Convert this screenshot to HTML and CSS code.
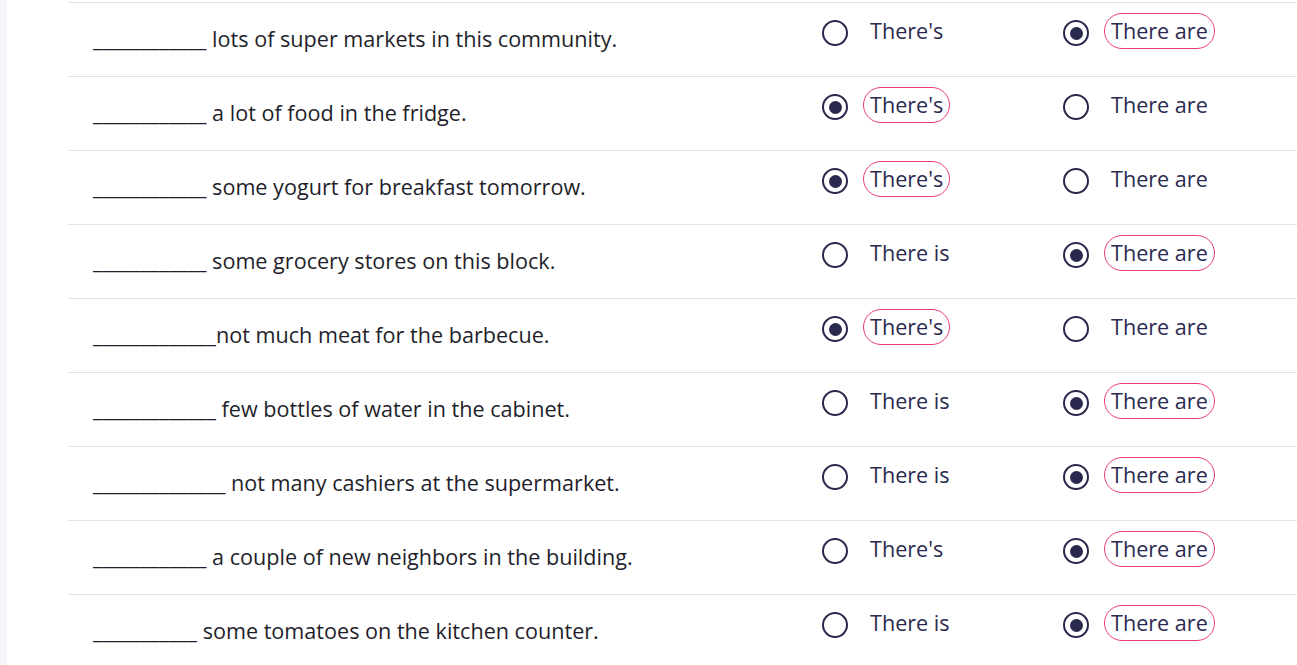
FILE: index.html
```html
<!DOCTYPE html>
<html>
<head>
<meta charset="utf-8">
<link rel="stylesheet" href="styles.css">
</head>
<body>
<div class="page">
  <div class="strip"></div>
  <div class="list">
    <div class="row">
      <div class="q">____________ lots of super markets in this community.</div>
      <div class="opt"><span class="radio"></span><span class="label">There's</span></div>
      <div class="opt"><span class="radio on"></span><span class="label sel">There are</span></div>
    </div>
    <div class="row">
      <div class="q">____________ a lot of food in the fridge.</div>
      <div class="opt"><span class="radio on"></span><span class="label sel">There's</span></div>
      <div class="opt"><span class="radio"></span><span class="label">There are</span></div>
    </div>
    <div class="row">
      <div class="q">____________ some yogurt for breakfast tomorrow.</div>
      <div class="opt"><span class="radio on"></span><span class="label sel">There's</span></div>
      <div class="opt"><span class="radio"></span><span class="label">There are</span></div>
    </div>
    <div class="row">
      <div class="q">____________ some grocery stores on this block.</div>
      <div class="opt"><span class="radio"></span><span class="label">There is</span></div>
      <div class="opt"><span class="radio on"></span><span class="label sel">There are</span></div>
    </div>
    <div class="row">
      <div class="q">_____________not much meat for the barbecue.</div>
      <div class="opt"><span class="radio on"></span><span class="label sel">There's</span></div>
      <div class="opt"><span class="radio"></span><span class="label">There are</span></div>
    </div>
    <div class="row">
      <div class="q">_____________ few bottles of water in the cabinet.</div>
      <div class="opt"><span class="radio"></span><span class="label">There is</span></div>
      <div class="opt"><span class="radio on"></span><span class="label sel">There are</span></div>
    </div>
    <div class="row">
      <div class="q">______________ not many cashiers at the supermarket.</div>
      <div class="opt"><span class="radio"></span><span class="label">There is</span></div>
      <div class="opt"><span class="radio on"></span><span class="label sel">There are</span></div>
    </div>
    <div class="row">
      <div class="q">____________ a couple of new neighbors in the building.</div>
      <div class="opt"><span class="radio"></span><span class="label">There's</span></div>
      <div class="opt"><span class="radio on"></span><span class="label sel">There are</span></div>
    </div>
    <div class="row">
      <div class="q">___________ some tomatoes on the kitchen counter.</div>
      <div class="opt"><span class="radio"></span><span class="label">There is</span></div>
      <div class="opt"><span class="radio on"></span><span class="label sel">There are</span></div>
    </div>
  </div>
</div>
</body>
</html>
```
FILE: styles.css
```css
html, body {
  margin: 0;
  padding: 0;
  background: #ffffff;
  overflow: hidden;
}
body {
  font-family: "Open Sans", "Noto Sans", sans-serif;
  width: 1297px;
  height: 665px;
}
.page {
  display: flex;
  height: 665px;
}
.strip {
  width: 7px;
  flex: none;
  background: #f3f5f9;
}
.list {
  margin-left: 61px;
  margin-top: 2px;
  flex: 1;
}
.row {
  display: grid;
  grid-template-columns: 729px 241px 1fr;
  align-items: start;
  height: 73px;
  border-top: 1px solid #e2e2e2;
  padding-left: 25px;
}
.q {
  padding-top: 22px;
  font-size: 21.6px;
  line-height: 28px;
  color: #1f1f2b;
  white-space: pre;
}
.opt {
  display: flex;
  align-items: flex-start;
  gap: 15px;
  padding-top: 10px;
}
.radio {
  width: 26px;
  height: 26px;
  margin-top: 7px;
  box-sizing: border-box;
  border: 2.5px solid #29284d;
  border-radius: 50%;
  flex: none;
  display: flex;
  align-items: center;
  justify-content: center;
}
.radio.on::after {
  content: "";
  width: 13px;
  height: 13px;
  border-radius: 50%;
  background: #29284d;
}
.label {
  font-size: 21.6px;
  line-height: 34px;
  height: 34px;
  padding: 0 6px;
  border: 1px solid transparent;
  border-radius: 18px;
  color: #2b2a50;
}
.label.sel {
  border-color: #ec3b73;
}
```
